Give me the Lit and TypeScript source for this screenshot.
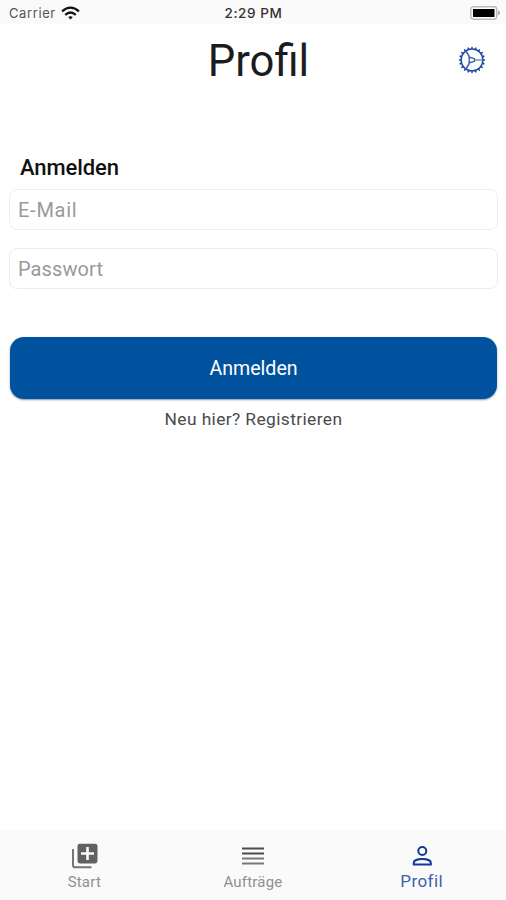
import { LitElement, html, css, svg } from "lit";
import { customElement } from "lit/decorators.js";

const teeth = Array.from({ length: 20 }, (_, i) => i * 18);

@customElement("app-root")
export class AppRoot extends LitElement {
  static styles = css`
    :host {
      display: flex;
      flex-direction: column;
      height: 900px;
      background: #fff;
      font-family: Roboto, "Liberation Sans", sans-serif;
      color: #1c1c1c;
      overflow: hidden;
    }
    svg { display: block; }
    .status {
      display: grid;
      grid-template-columns: 1fr auto 1fr;
      align-items: center;
      height: 24px;
      padding: 2px 6px 0 9px;
      box-sizing: border-box;
      background: #fafafa;
      font-family: Inter, Roboto, sans-serif;
      font-size: 13px;
      color: #555;
    }
    .left { display: flex; align-items: center; gap: 5px; }
    .carrier { letter-spacing: 0.6px; }
    .time { font-size: 13.5px; font-weight: 500; color: #333; letter-spacing: 0.6px; margin-right: 2px; }
    .battery { justify-self: end; }
    .header {
      display: grid;
      grid-template-columns: 1fr auto 1fr;
      align-items: center;
      height: 72px;
      padding: 0 20px;
    }
    .title {
      grid-column: 2;
      margin: 0 -11px 0 0;
      padding-top: 4px;
      font-size: 43.6px;
      font-weight: 400;
      line-height: 68px;
    }
    .gear { justify-self: end; }
    .form { display: flex; flex-direction: column; padding: 58px 8px 0 9px; }
    .heading {
      margin: 0 0 8px 11px;
      font-size: 22px;
      line-height: 28px;
      height: 27px;
      letter-spacing: -0.1px;
      font-weight: 500;
      color: #111;
    }
    .field {
      box-sizing: border-box;
      height: 41px;
      margin-bottom: 18px;
      padding: 0 8px;
      border: 1px solid #ededed;
      border-radius: 8px;
      font-size: 20px;
      line-height: 40px;
      color: #999;
    }
    .email { letter-spacing: 0.75px; }
    .password { letter-spacing: 0.1px; }
    .submit {
      height: 62px;
      margin: 30px 1px 0 1px;
      border: 0;
      border-radius: 14px;
      background: #00529e;
      box-shadow: 0 1px 2px rgba(0, 20, 60, 0.45);
      color: #fff;
      font: 400 19.6px/63px Roboto, sans-serif;
      text-align: center;
    }
    .register {
      margin-top: 10px;
      font-size: 17.4px;
      letter-spacing: 0.38px;
      line-height: 20px;
      text-align: center;
      color: #4a4a4a;
    }
    .tabs {
      display: grid;
      grid-template-columns: repeat(3, 1fr);
      height: 70px;
      margin-top: auto;
      background: #fafafa;
    }
    .tab {
      display: flex;
      flex-direction: column;
      align-items: center;
      padding-top: 12px;
      font-size: 15px;
      line-height: 18px;
      letter-spacing: 0.2px;
      color: #909090;
    }
    .tab svg { margin-bottom: 3px; }
    .active { font-size: 17px; line-height: 16px; letter-spacing: 0.4px; color: #3c62ac; }
  `;

  render() {
    return html`
      <div class="status">
        <div class="left">
          <span class="carrier">Carrier</span>
          <svg width="19" height="15" viewBox="0 0 18 14" fill="none" stroke="#111" stroke-width="2.2">
            <path d="M1 4.9Q9-2 17 4.9M4 8.2Q9 3.9 14 8.2" />
            <path d="M9 12.8L6.8 10.4Q9 8.6 11.2 10.4Z" fill="#111" stroke="none" />
          </svg>
        </div>
        <span class="time">2:29 PM</span>
        <svg class="battery" width="30" height="14" viewBox="0 0 30 14">
          <rect x="0.8" y="0.8" width="25.9" height="12.4" rx="2.6" fill="#fff" stroke="#b9b9b9" stroke-width="1.4" />
          <rect x="3" y="3" width="21.5" height="8" fill="#000" />
          <path d="M28 4.6Q30 5.5 30 7T28 9.4Z" fill="#aaa" />
        </svg>
      </div>
      <header class="header">
        <h1 class="title">Profil</h1>
        <svg class="gear" width="28" height="28" viewBox="-14 -14 28 28" fill="none" stroke="#2148a5">
          <circle r="10.9" stroke-width="1.5" />
          ${teeth.map((a) => svg`<path d="M-1 -11.3L-0.5 -13.2H0.5L1 -11.3Z" fill="#1c44a0" stroke="none" transform="rotate(${a})" />`)}
          <path d="M-2.8 -2.8L2.4 -1.4V1.4L-2.8 2.8Z" stroke-width="1.4" stroke-linejoin="round" stroke="#3b62ae" />
          <path d="M2.8 0H10.4" stroke-width="1.4" stroke="#6b88c0" />
          <path d="M-2.4 -2.8L-6 -9M-2.4 2.8L-6 9" stroke-width="1.5" stroke="#3b62ae" />
        </svg>
      </header>
      <main class="form">
        <h2 class="heading">Anmelden</h2>
        <div class="field email">E-Mail</div>
        <div class="field password">Passwort</div>
        <div class="submit" role="button">Anmelden</div>
        <div class="register">Neu hier? Registrieren</div>
      </main>
      <nav class="tabs">
        <div class="tab">
          <svg width="28" height="28" viewBox="0 0 28 28">
            <rect x="7.5" y="1.8" width="20" height="19.6" rx="2.4" fill="#616161" />
            <path d="M17.5 5V18M11 11.5H24" stroke="#fafafa" stroke-width="2.6" />
            <path d="M3 7V23.2Q3 25.3 5.2 25.3H21.5" fill="none" stroke="#757575" stroke-width="2" />
          </svg>
          <span>Start</span>
        </div>
        <div class="tab">
          <svg width="28" height="28" viewBox="0 0 28 28" stroke-width="1.8">
            <path d="M3 6.5H25M3 11.5H25" stroke="#4c4c4c" />
            <path d="M3 16.5H25M3 21.5H25" stroke="#777" />
          </svg>
          <span>Aufträge</span>
        </div>
        <div class="tab active">
          <svg width="28" height="28" viewBox="0 0 28 28" fill="none" stroke="#14369b" stroke-width="2">
            <circle cx="14.3" cy="9" r="4" />
            <path d="M5.8 22.4V20.7C5.8 18.4 10 17.1 14.3 17.1S22.8 18.4 22.8 20.7V22.4Z" />
          </svg>
          <span>Profil</span>
        </div>
      </nav>
    `;
  }
}
